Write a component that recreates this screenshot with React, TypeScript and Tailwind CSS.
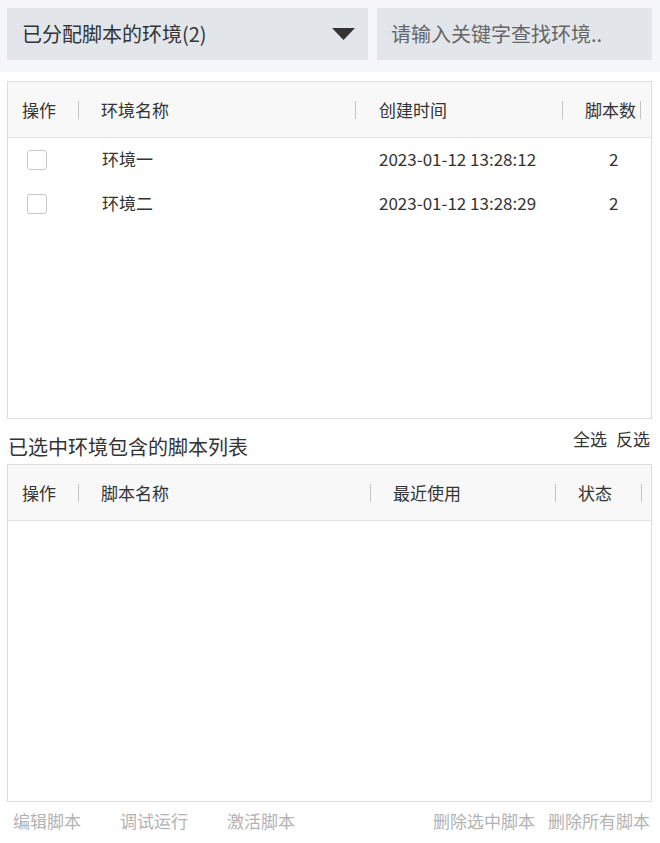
import React from "react";

const envRows = [
  { name: "环境一", created: "2023-01-12 13:28:12", count: 2 },
  { name: "环境二", created: "2023-01-12 13:28:29", count: 2 },
];

function Sep() {
  return <span className="w-px h-[18px] bg-[#c4c4c4] shrink-0" />;
}

function HeadCell({ label, width, pad }: { label: string; width: string; pad: string }) {
  return (
    <div className={`flex items-center justify-between h-full ${width} ${pad}`}>
      <span>{label}</span>
      <Sep />
    </div>
  );
}

export default function App() {
  return (
    <div
      className="w-[660px] h-[843px] bg-white text-[#333] flex flex-col"
      style={{ fontFamily: '"Noto Sans CJK SC", "Noto Sans", sans-serif' }}
    >
      {/* top filter bar */}
      <div className="bg-[#f4f6f9] px-[7px] pt-2 pb-[12px] flex gap-[9px]">
        <div className="w-[361px] h-[52px] bg-[#e2e6eb] flex items-center justify-between pl-[15px] pr-[12px]">
          <span className="text-[20px] leading-none">已分配脚本的环境(2)</span>
          <svg width="25" height="14" viewBox="0 0 25 14">
            <path d="M1 1 L24 1 L12.5 13 Z" fill="#333" />
          </svg>
        </div>
        <div className="flex-1 h-[52px] bg-[#e2e6eb] flex items-center pl-[14px] mr-[1px]">
          <span className="text-[20px] leading-none text-[#666]">请输入关键字查找环境..</span>
        </div>
      </div>

      {/* environment table */}
      <div className="mx-[7px] mt-[9px] w-[645px] h-[338px] border border-[#dcdcdc] flex flex-col">
        <div className="h-[56px] bg-[#f8f8f8] border-b border-[#e3e3e3] flex items-center text-[17px]">
          <HeadCell label="操作" width="w-[71px]" pad="pl-[14px]" />
          <HeadCell label="环境名称" width="w-[277px]" pad="pl-[22px]" />
          <HeadCell label="创建时间" width="w-[207px]" pad="pl-[23px]" />
          <HeadCell label="脚本数" width="w-[78px]" pad="pl-[22px]" />
        </div>
        {envRows.map((r) => (
          <div key={r.name} className="h-[44px] flex items-center text-[17px] pb-[2px]">
            <div className="w-[71px] pl-[19px] flex items-center pt-[2px]">
              <span className="w-[20px] h-[20px] rounded-[3px] border border-[#c6c6c6] bg-white" />
            </div>
            <div className="w-[277px] pl-[23px]">{r.name}</div>
            <div className="w-[207px] pl-[23px]">{r.created}</div>
            <div className="w-[78px] pl-[46px]">{r.count}</div>
          </div>
        ))}
      </div>

      {/* script list label */}
      <div className="h-[45px] flex justify-between px-[8px]">
        <span className="text-[20px] self-end leading-none mb-[7px]">已选中环境包含的脚本列表</span>
        <div className="flex gap-[9px] text-[17px] leading-none mt-[11px] mr-[2px]">
          <span>全选</span>
          <span>反选</span>
        </div>
      </div>

      {/* script table */}
      <div className="mx-[7px] w-[645px] h-[338px] border border-[#dcdcdc] flex flex-col">
        <div className="h-[56px] bg-[#f8f8f8] border-b border-[#e3e3e3] flex items-center text-[17px]">
          <HeadCell label="操作" width="w-[71px]" pad="pl-[14px]" />
          <HeadCell label="脚本名称" width="w-[292px]" pad="pl-[22px]" />
          <HeadCell label="最近使用" width="w-[185px]" pad="pl-[22px]" />
          <HeadCell label="状态" width="w-[86px]" pad="pl-[22px]" />
        </div>
      </div>

      {/* footer actions */}
      <div className="flex justify-between items-center text-[17px] text-[#b3b3b3] pl-[13px] pr-[10px] mt-[6px]">
        <div className="flex gap-[39px]">
          <span>编辑脚本</span>
          <span>调试运行</span>
          <span>激活脚本</span>
        </div>
        <div className="flex gap-[13px]">
          <span>删除选中脚本</span>
          <span>删除所有脚本</span>
        </div>
      </div>
    </div>
  );
}
